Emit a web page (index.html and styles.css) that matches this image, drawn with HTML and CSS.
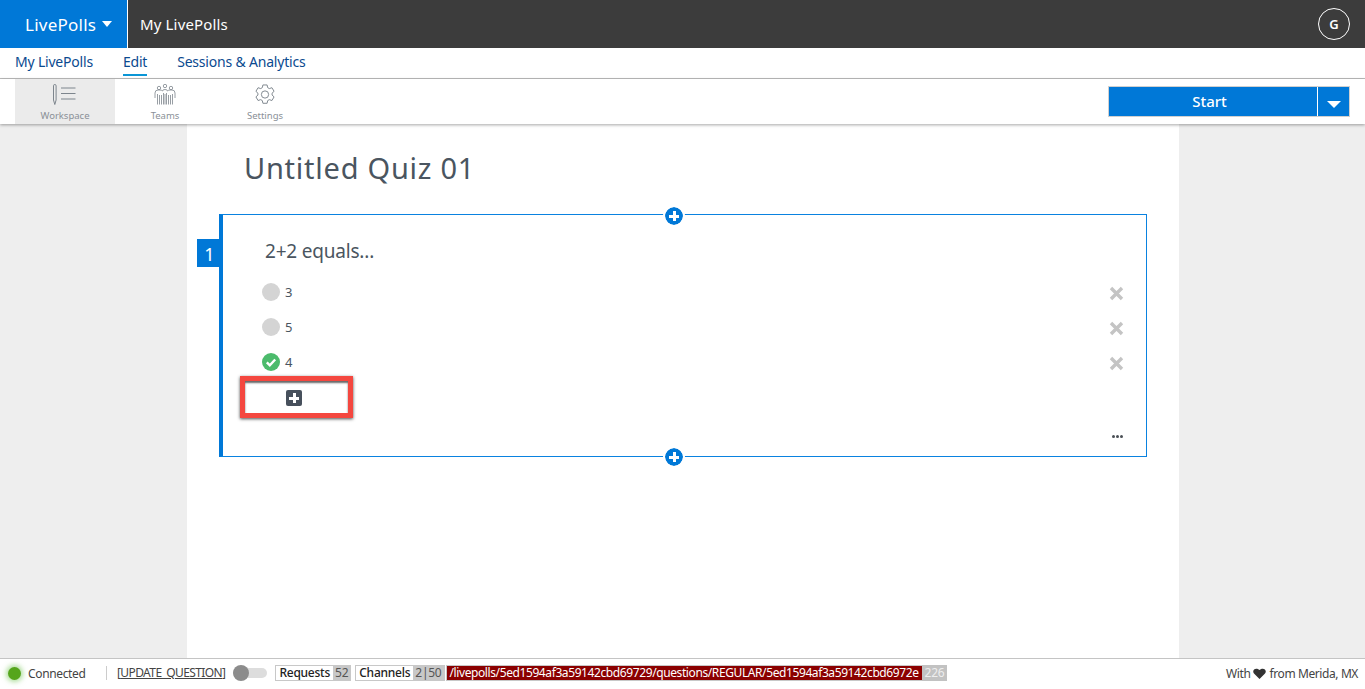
FILE: index.html
```html
<!DOCTYPE html>
<html lang="en">
<head>
    <meta charset="UTF-8">
    <title>LivePolls</title>
    <link rel="stylesheet" href="styles.css">
</head>
<body>
    <header class="topbar">
        <div class="brand">LivePolls <span class="caret"></span></div>
        <div class="topbar-title">My LivePolls</div>
        <div class="avatar">G</div>
    </header>

    <nav class="subnav">
        <a href="#">My LivePolls</a>
        <a href="#" class="active">Edit</a>
        <a href="#">Sessions &amp; Analytics</a>
    </nav>

    <div class="toolbar">
        <div class="tool selected">
            <svg width="26" height="21" viewBox="0 0 26 21" fill="none" stroke="#7d858d" stroke-width="1">
                <path d="M1.500 1.800a1.300 1.300 0 0 1 2.600 0V16l-1.300 4.500L1.500 16z"/>
                <path d="M9 4h14.500M9 9.500h14.500M9 15h14.500"/>
            </svg>
            <span>Workspace</span>
        </div>
        <div class="tool">
            <svg width="22" height="21" viewBox="0 0 22 21" fill="none" stroke="#7d858d" stroke-width="0.8">
                <circle cx="11" cy="2" r="1.700"/>
                <circle cx="5" cy="4" r="1.700"/>
                <circle cx="17" cy="4" r="1.700"/>
                <path d="M1 14V9q0-3 3-3h2q1.500 0 2.500 1M21 14V9q0-3-3-3h-2q-1.500 0-2.500 1M8.500 7q0-1.500 2.500-1.500T13.500 7"/>
                <path d="M3.500 10v10.500M5.500 11v9.500M7.500 11v9.500M9.500 9v11.500M11 10v10.500M12.500 9v11.500M14.500 11v9.500M16.500 11v9.500M18.500 10v10.500"/>
            </svg>
            <span>Teams</span>
        </div>
        <div class="tool">
            <svg width="24" height="21" viewBox="0 0 24 22" fill="none" stroke="#7d858d" stroke-width="1">
                <path d="M9.800 1h4.400l.6 2.800 1.700 1 2.800-.9 2.200 3.800-2.100 1.900v2l2.100 1.900-2.200 3.800-2.800-.9-1.700 1-.6 2.800H9.800l-.6-2.800-1.700-1-2.800.9-2.200-3.800 2.100-1.900v-2L2.500 7.700l2.200-3.800 2.800.9 1.700-1z"/>
                <circle cx="12" cy="11" r="3.800"/>
            </svg>
            <span>Settings</span>
        </div>
        <div class="start-group">
            <button class="start-btn">Start</button>
            <button class="start-menu"><span class="caret large"></span></button>
        </div>
    </div>

    <main class="workarea">
        <section class="sheet">
            <h1 class="quiz-title">Untitled Quiz 01</h1>

            <div class="question">
                <div class="q-number">1</div>
                <div class="add-circle top"></div>
                <h2 class="q-text">2+2 equals...</h2>

                <div class="option">
                    <span class="radio"></span><span class="opt-label">3</span>
                    <svg class="remove" width="15" height="15" viewBox="0 0 15 15"><path d="M2 2l11 11M13 2L2 13"/></svg>
                </div>
                <div class="option">
                    <span class="radio"></span><span class="opt-label">5</span>
                    <svg class="remove" width="15" height="15" viewBox="0 0 15 15"><path d="M2 2l11 11M13 2L2 13"/></svg>
                </div>
                <div class="option">
                    <svg class="radio-ok" width="18" height="18" viewBox="0 0 18 18">
                        <circle cx="9" cy="9" r="9" fill="#4cbb6c"/>
                        <path d="M4.800 9.300l3 3 5.400-5.800" fill="none" stroke="#fff" stroke-width="2.400"/>
                    </svg>
                    <span class="opt-label">4</span>
                    <svg class="remove" width="15" height="15" viewBox="0 0 15 15"><path d="M2 2l11 11M13 2L2 13"/></svg>
                </div>

                <!-- highlight box from the screenshot -->
                <div class="add-option"><span class="plus-box"></span></div>

                <div class="more"><i></i><i></i><i></i></div>
                <div class="add-circle bottom"></div>
            </div>
        </section>
    </main>

    <footer class="statusbar">
        <span class="led"></span>
        <span class="conn">Connected</span>
        <span class="action">[<u>UPDATE_QUESTION</u>]</span>
        <span class="switch"></span>
        <span class="counter"><b>Requests</b><em>52</em></span>
        <span class="counter"><b>Channels</b><em>2|50</em></span>
        <span class="path">/livepolls/5ed1594af3a59142cbd69729/questions/REGULAR/5ed1594af3a59142cbd6972e</span><span class="path-count">226</span>
        <span class="credit">With <svg width="13" height="11" viewBox="0 0 13 11"><path d="M6.500 11L1 5.500C-1.500 2.500 2.500-1.500 6.500 2 10.500-1.500 14.500 2.500 12 5.500z" fill="#333"/></svg> from Merida, MX</span>
    </footer>
</body>
</html>
```

FILE: styles.css
```css
* {
    box-sizing: border-box;
}
html, body {
    height: 100%;
}
body {
    margin: 0;
    display: flex;
    flex-direction: column;
    overflow: hidden;
    font-family: 'Noto Sans', 'Open Sans', sans-serif;
    color: #4a5560;
    background: #fff;
}

/* top bar */
.topbar {
    height: 48px;
    flex: none;
    display: flex;
    align-items: center;
    background: #3c3c3c;
    color: #fff;
}
.brand {
    width: 128px;
    height: 48px;
    display: flex;
    align-items: center;
    gap: 6px;
    padding-left: 25px;
    background: #0078d7;
    border-right: 1px solid #fff;
    font-size: 17px;
    letter-spacing: 0.25px;
}
.caret {
    display: inline-block;
    width: 0;
    height: 0;
    border-left: 5.5px solid transparent;
    border-right: 5.5px solid transparent;
    border-top: 6px solid #fff;
}
.caret.large {
    border-left-width: 7px;
    border-right-width: 7px;
    border-top-width: 7px;
}
.topbar-title {
    margin-left: 12px;
    font-size: 15px;
    letter-spacing: 0.15px;
}
.avatar {
    width: 32px;
    height: 32px;
    margin: 0 15px 0 auto;
    border: 1px solid #fff;
    border-radius: 50%;
    display: flex;
    align-items: center;
    justify-content: center;
    font-size: 13px;
    font-weight: 600;
}

/* sub navigation */
.subnav {
    height: 31px;
    flex: none;
    display: flex;
    gap: 30px;
    padding-left: 15px;
    border-bottom: 1px solid #bdbdbd;
    font-size: 14px;
    letter-spacing: -0.2px;
}
.subnav a {
    height: 24px;
    margin-top: 4px;
    line-height: 20px;
    color: #0b4a8f;
    text-decoration: none;
}
.subnav a.active {
    border-bottom: 2px solid #0a96d6;
}

/* toolbar */
.toolbar {
    height: 45px;
    flex: none;
    display: flex;
    padding-left: 15px;
    position: relative;
    box-shadow: 0 1px 3px rgba(0, 0, 0, 0.35);
}
.tool {
    width: 100px;
    display: flex;
    flex-direction: column;
    align-items: center;
    padding-top: 5px;
    font-size: 9.5px;
    color: #8a9097;
}
.tool svg {
    flex: none;
}
.tool span {
    margin-top: 4px;
    line-height: 14px;
}
.tool.selected {
    background: #ebebeb;
}
.start-group {
    display: flex;
    height: 31px;
    margin: 7px 15px 0 auto;
    border: 1px solid #d0d0d0;
}
.start-group button {
    border: 0;
    padding: 0;
    background: #0078d7;
    color: #fff;
    font-family: inherit;
    font-size: 15px;
    font-weight: 500;
}
.start-group .start-btn {
    width: 208px;
    padding: 0 7px 2px 0;
}
.start-menu {
    width: 32px;
    border-left: 1px solid #fff !important;
}

/* work area */
.workarea {
    flex: 1;
    min-height: 0;
    background: #eee;
    display: flex;
    justify-content: center;
}
.sheet {
    width: 992px;
    margin-left: 1px;
    padding: 24px 32px 0;
    background: #fff;
}
.quiz-title {
    margin: 0 0 26px 25px;
    font-size: 29px;
    line-height: 40px;
    font-weight: 400;
    letter-spacing: 0.75px;
}
.question {
    position: relative;
    width: 928px;
    height: 243px;
    padding: 23px 0 0 39px;
    border: 1px solid #0a82e0;
    border-left: 4px solid #0078d7;
}
.q-number {
    position: absolute;
    left: -26px;
    top: 24px;
    width: 25px;
    height: 28px;
    background: #0078d7;
    color: #fff;
    font-size: 18px;
    line-height: 30px;
    text-align: center;
}
.q-text {
    margin: 0 0 10px 3px;
    font-size: 19px;
    line-height: 26px;
    font-weight: 400;
    letter-spacing: -0.2px;
}
.add-circle {
    position: absolute;
    left: 442px;
    width: 18px;
    height: 18px;
    border-radius: 50%;
    background:
        linear-gradient(#fff, #fff) center / 10px 3px no-repeat,
        linear-gradient(#fff, #fff) center / 3px 10px no-repeat,
        #0078d7;
    outline: 2px solid #fff;
}
.add-circle.top {
    top: -8px;
}
.add-circle.bottom {
    bottom: -10px;
}
.option {
    height: 35px;
    display: flex;
    align-items: center;
    font-size: 13px;
}
.radio {
    width: 18px;
    height: 18px;
    border-radius: 50%;
    background: #d4d4d4;
}
.opt-label {
    margin-left: 5px;
}
.remove {
    position: absolute;
    right: 22px;
    margin-top: 4px;
    fill: none;
    stroke: #c4c4c4;
    stroke-width: 3.4;
}
.add-option {
    width: 113px;
    height: 42px;
    margin: -3px 0 0 -22px;
    padding: 2px 0 0 41px;
    position: relative;
    z-index: 1;
    display: flex;
    align-items: center;
    border: 5px solid #f4473f;
    box-shadow: 0 1px 3px rgba(0, 0, 0, 0.7), inset 0 2px 2px rgba(0, 0, 0, 0.6);
    background: #fff;
}
.plus-box {
    width: 16px;
    height: 16px;
    border-radius: 2px;
    background:
        linear-gradient(#fff, #fff) center / 10px 3px no-repeat,
        linear-gradient(#fff, #fff) center / 3px 10px no-repeat,
        #47505c;
}
.more {
    position: absolute;
    right: 23px;
    bottom: 18px;
    display: flex;
    gap: 1px;
}
.more i {
    width: 3px;
    height: 3px;
    border-radius: 50%;
    background: #4a4f55;
}

/* status bar */
.statusbar {
    height: 31px;
    flex: none;
    display: flex;
    align-items: center;
    padding: 0 7px 2px 8px;
    border-top: 1px solid #c4c4c4;
    font-size: 12px;
    letter-spacing: -0.25px;
    color: #444;
    white-space: nowrap;
}
.led {
    width: 13px;
    height: 13px;
    border-radius: 50%;
    background: #55a51c;
    box-shadow: 0 0 5px 2px rgba(95, 190, 60, 0.5);
}
.conn {
    margin-left: 7px;
    width: 78px;
    letter-spacing: -0.35px;
}
.action {
    padding-left: 10px;
    border-left: 1px solid #ccc;
    line-height: 14px;
    letter-spacing: -0.6px;
}
.switch {
    position: relative;
    width: 34px;
    height: 10px;
    margin: 0 8px 0 8px;
    border-radius: 5px;
    background: #ddd;
}
.switch::before {
    content: "";
    position: absolute;
    left: 0;
    top: -3px;
    width: 16px;
    height: 16px;
    border-radius: 50%;
    background: #8c8c8c;
}
.counter {
    display: flex;
    height: 16px;
    margin-right: 4px;
    border: 1px solid #c8c8c8;
    line-height: 14px;
}
.counter b {
    padding: 0 3px;
    font-weight: 500;
    color: #222;
}
.counter em {
    padding: 0 2px;
    font-style: normal;
    background: #c8c8c8;
    color: #555;
}
.path {
    height: 16px;
    margin-left: -3px;
    padding: 0 3px;
    line-height: 14px;
    background: #8b0000;
    color: #fff;
    border: 1px solid #c8c8c8;
    border-right: 0;
    letter-spacing: -0.4px;
}
.path-count {
    height: 16px;
    padding: 0 3px;
    line-height: 15px;
    background: #c2c2c2;
    color: #eee;
}
.credit {
    margin-left: auto;
    display: flex;
    align-items: center;
    gap: 3px;
    letter-spacing: -0.4px;
}
```
